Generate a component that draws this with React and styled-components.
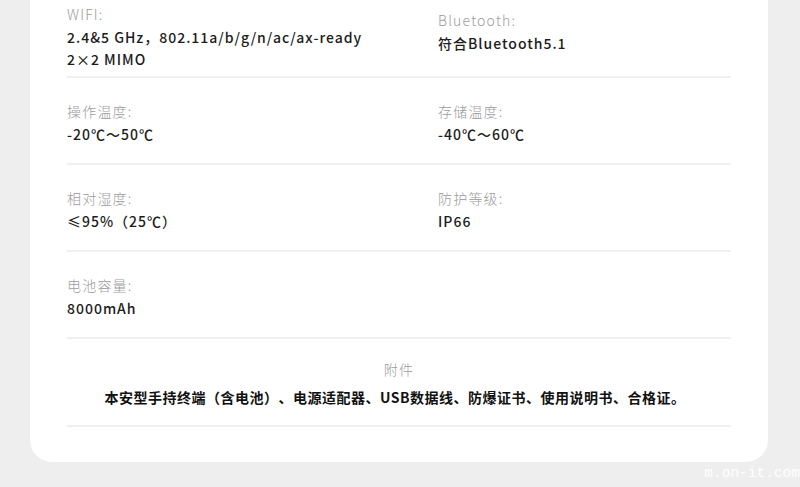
import React from 'react';
import styled, { createGlobalStyle } from 'styled-components';

const specs = [
  [
    { label: 'WIFI:', value: ['2.4&5 GHz，802.11a/b/g/n/ac/ax-ready', '2×2 MIMO'] },
    { label: 'Bluetooth:', value: ['符合Bluetooth5.1'], shift: 6 },
  ],
  [
    { label: '操作温度:', value: ['-20℃～50℃'] },
    { label: '存储温度:', value: ['-40℃～60℃'] },
  ],
  [
    { label: '相对湿度:', value: ['≤95%（25℃）'] },
    { label: '防护等级:', value: ['IP66'] },
  ],
  [{ label: '电池容量:', value: ['8000mAh'] }],
];

const App = () => {
  return (
    <Page>
      <GlobalStyle />
      <Card>
        {specs.map((row, i) => (
          <SpecRow key={i} $first={i === 0}>
            {row.map((item) => (
              <SpecCell key={item.label} $shift={item.shift || 0}>
                <Label>{item.label}</Label>
                {item.value.map((line) => (
                  <Value key={line}>{line}</Value>
                ))}
              </SpecCell>
            ))}
          </SpecRow>
        ))}
        <Accessories>
          <Label>附件</Label>
          <AccessoryText>
            本安型手持终端（含电池）、电源适配器、USB数据线、防爆证书、使用说明书、合格证。
          </AccessoryText>
        </Accessories>
      </Card>
      <Watermark>m.on-it.com</Watermark>
    </Page>
  );
};

const GlobalStyle = createGlobalStyle`
  html, body {
    margin: 0;
    padding: 0;
    background: #eeeeee;
  }
  body {
    font-family: "Noto Sans CJK SC", "Noto Sans", sans-serif;
    text-spacing-trim: space-all;
  }
`;

const Page = styled.div`
  position: relative;
  height: 487px;
  overflow: hidden;
  background: #eeeeee;
  padding: 0 32px 0 30px;
`;

const Card = styled.div`
  background: #ffffff;
  border-radius: 0 0 22px 22px;
  padding: 0 37px 35px;
`;

const SpecRow = styled.div`
  display: grid;
  grid-template-columns: 371px 1fr;
  align-items: start;
  padding: ${(p) => (p.$first ? '4px 0 6px' : '23px 0 18px')};
  border-bottom: 2px solid #f0f0f0;
`;

const SpecCell = styled.div`
  display: flex;
  flex-direction: column;
  padding-top: ${(p) => p.$shift}px;
`;

const Label = styled.div`
  font-size: 14px;
  line-height: 20px;
  font-weight: 300;
  color: #9b9b9b;
  letter-spacing: 1.2px;
  margin-bottom: 2px;
`;

const Value = styled.div`
  font-size: 14px;
  line-height: 22px;
  font-weight: 500;
  color: #1c1c1c;
  letter-spacing: 1px;
`;

const Accessories = styled.div`
  display: flex;
  flex-direction: column;
  align-items: center;
  padding: 20px 0 17px;
  border-bottom: 2px solid #f0f0f0;

  ${Label} {
    margin-bottom: 7px;
  }
`;

const AccessoryText = styled.div`
  font-size: 14px;
  line-height: 22px;
  font-weight: 700;
  color: #111111;
  letter-spacing: 0.5px;
  padding-right: 8px;
`;

const Watermark = styled.div`
  position: absolute;
  right: 0;
  bottom: 6px;
  font-family: "Liberation Mono", "DejaVu Sans Mono", monospace;
  font-size: 14.5px;
  color: #ffffff;
`;

export default App;
